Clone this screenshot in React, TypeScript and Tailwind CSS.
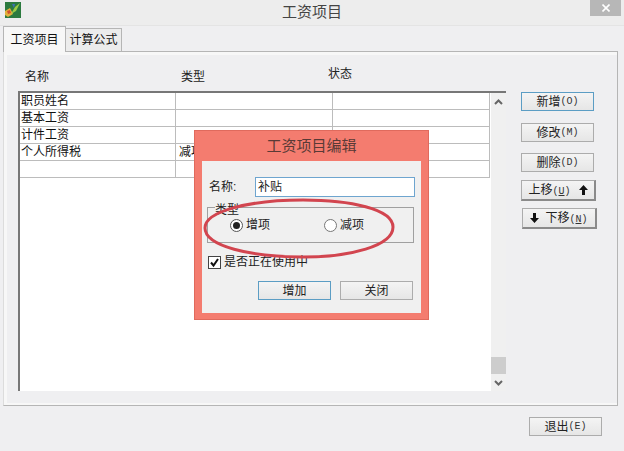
const font = { fontFamily: '"Liberation Sans", "Noto Sans CJK SC", sans-serif' }

const rows = [
  ['职员姓名', ''],
  ['基本工资', ''],
  ['计件工资', ''],
  ['个人所得税', '减项'],
  ['', ''],
]

const AppIcon = () => (
  <svg width="16" height="16" viewBox="0 0 16 16">
    <rect width="16" height="16" fill="#2c7a3f" />
    <path d="M0 9 L5 6 L8 12 L3 15 L0 13Z" fill="#e2b13c" />
    <path d="M2 9 L5 8 L6 11 L3 12Z" fill="#d24f2e" />
    <path d="M6 12 L10 5 L15 1 L11 9Z" fill="#9ccb45" />
    <path d="M7 2 L10 2 L9 6Z" fill="#3f6fb5" />
  </svg>
)

const Hotkey = ({ k, underline }: { k: string; underline?: boolean }) => (
  <span className="font-['Liberation_Mono'] text-[10px] text-[#333]">
    (<span className={underline ? 'underline' : ''}>{k}</span>)
  </span>
)

const Btn = ({
  children,
  className,
  focused,
}: {
  children: React.ReactNode
  className: string
  focused?: boolean
}) => (
  <div
    className={`flex items-center justify-center text-xs text-[#222] border bg-gradient-to-b from-[#f4f4f4] to-[#e6e6e6] ${
      focused ? 'border-[#5b9dc4]' : 'border-[#acacac]'
    } ${className}`}
  >
    {children}
  </div>
)

const Arrow = ({ down }: { down?: boolean }) => (
  <svg width="9" height="10" viewBox="0 0 9 10" className={down ? 'rotate-180' : ''}>
    <path d="M4.5 0 L9 5 L6 5 L6 10 L3 10 L3 5 L0 5Z" fill="#111" />
  </svg>
)

const Chevron = ({ down }: { down?: boolean }) => (
  <svg width="9" height="6" viewBox="0 0 9 6" className={down ? 'rotate-180' : ''}>
    <path d="M1 5 L4.5 1.5 L8 5" fill="none" stroke="#666" strokeWidth="2" />
  </svg>
)

const SalaryTable = () => (
  <div className="ml-[11px] w-[488px] h-[300px] flex border-t-2 border-l-2 border-t-[#777] border-l-[#777] bg-white">
    <div className="w-[470px]">
      {rows.map((row, i) => (
        <div key={i} className="flex h-[17px] border-b border-[#bcbcbc] w-[470px]">
          <div className="w-[156px] border-r border-[#bcbcbc] pl-[1px] text-xs leading-[16px] text-[#111]">
            {row[0]}
          </div>
          <div className="w-[157px] border-r border-[#bcbcbc] pl-[3px] text-xs leading-[16px] text-[#111]">
            {row[1]}
          </div>
          <div className="flex-1 border-r border-[#bcbcbc]" />
        </div>
      ))}
    </div>
    <div className="w-[16px] bg-[#f0f0f0] flex flex-col items-center border-l border-white">
      <div className="h-[18px] flex items-center justify-center">
        <Chevron />
      </div>
      <div className="flex-1" />
      <div className="w-full h-[17px] bg-[#cdcdcd]" />
      <div className="h-[17px] flex items-center justify-center">
        <Chevron down />
      </div>
    </div>
  </div>
)

const EditDialog = () => (
  <div className="absolute left-[194px] top-[130px] w-[235px] h-[190px] bg-[#f47c6f] border border-[#e06a5d] flex flex-col">
    <div className="h-[30px] flex items-center justify-center text-[15px] text-[#5a3a36]">工资项目编辑</div>
    <div className="mx-[7px] h-[152px] bg-[#f0f0f0] flex flex-col text-xs text-[#222]">
      <div className="flex items-center mt-[16px] ml-[7px] h-[20px]">
        <span className="w-[46px]">名称:</span>
        <div className="w-[160px] h-[20px] bg-white border border-[#6ea5cf] pl-[2px] leading-[18px]">补贴</div>
      </div>
      <div className="relative mt-[10px] ml-[5px] w-[207px] h-[36px] border border-[#a0a0a0] flex items-center">
        <span className="absolute -top-[5px] left-[7px] leading-[14px] bg-[#f0f0f0]">类型</span>
        <div className="ml-[22px] w-[13px] h-[13px] rounded-full border border-[#555] bg-white flex items-center justify-center">
          <div className="w-[7px] h-[7px] rounded-full bg-[#222]" />
        </div>
        <span className="ml-[3px]">增项</span>
        <div className="ml-[54px] w-[13px] h-[13px] rounded-full border border-[#777] bg-white" />
        <span className="ml-[3px]">减项</span>
      </div>
      <div className="flex items-center mt-[11px] ml-[6px]">
        <div className="w-[13px] h-[13px] border border-[#444] bg-white flex items-center justify-center">
          <svg width="11" height="11" viewBox="0 0 11 11">
            <path d="M2 5.5 L4.5 8.5 L9 2" fill="none" stroke="#111" strokeWidth="2" />
          </svg>
        </div>
        <span className="ml-[3px]">是否正在使用中</span>
      </div>
      <div className="flex mt-[11px] ml-[56px] gap-[9px]">
        <Btn focused className="w-[73px] h-[19px]">增加</Btn>
        <Btn className="w-[73px] h-[19px]">关闭</Btn>
      </div>
    </div>
  </div>
)

export default function App() {
  return (
    <div style={font} className="relative w-[624px] h-[451px] bg-[#efeff1] overflow-hidden">
      <div className="relative h-[26px] bg-[#ededed] flex items-center justify-center border-b border-[#e4e4e4]">
        <div className="absolute left-[5px] top-[2px]">
          <AppIcon />
        </div>
        <span className="text-[15px] text-[#444]">工资项目</span>
        <div className="absolute right-[3px] top-0 w-[31px] h-[16px] bg-[#b7b7b7] flex items-center justify-center">
          <svg width="8" height="8" viewBox="0 0 8 8">
            <path d="M0.5 0.5 L7.5 7.5 M7.5 0.5 L0.5 7.5" stroke="#fff" strokeWidth="1.6" />
          </svg>
        </div>
      </div>

      <div className="flex h-[26px] pl-[3px] items-end">
        <div className="w-[63px] h-[26px] bg-[#f7f7f7] border border-b-0 border-[#b5b5b5] flex items-center justify-center text-xs text-[#111]">
          工资项目
        </div>
        <div className="w-[56px] h-[24px] bg-[#ececec] border border-l-0 border-[#b5b5b5] flex items-center justify-center text-xs text-[#111]">
          计算公式
        </div>
        <div className="flex-1 mr-[6px] border-b border-[#b5b5b5]" />
      </div>

      <div className="ml-[3px] w-[615px] h-[354px] border border-t-0 border-[#b5b5b5] border-l-[#dcdcdc] pl-[3px] pt-[3px] bg-[#f7f7f7]">
        <div className="w-[610px] h-[348px] bg-[#efeff1]">
          <div className="flex h-[36px] text-xs text-[#222]">
            <span className="ml-[18px] mt-[14px] w-[156px]">名称</span>
            <span className="mt-[14px] w-[147px]">类型</span>
            <span className="mt-[11px]">状态</span>
          </div>
          <div className="flex">
            <SalaryTable />
            <div className="ml-[15px] flex flex-col items-start">
              <Btn focused className="w-[73px] h-[19px] mt-[1px]">
                新增<Hotkey k="O" />
              </Btn>
              <Btn className="w-[73px] h-[19px] mt-[12px]">
                修改<Hotkey k="M" />
              </Btn>
              <Btn className="w-[73px] h-[19px] mt-[11px]">
                删除<Hotkey k="D" />
              </Btn>
              <Btn className="w-[75px] h-[21px] mt-[8px] gap-[8px] border-b-2 border-r-2 border-b-[#8a8a8a] border-r-[#8a8a8a]">
                <span>
                  上移<Hotkey k="U" underline />
                </span>
                <Arrow />
              </Btn>
              <Btn className="w-[75px] h-[21px] mt-[7px] ml-[1px] gap-[6px] border-b-2 border-r-2 border-b-[#8a8a8a] border-r-[#8a8a8a]">
                <Arrow down />
                <span>
                  下移<Hotkey k="N" underline />
                </span>
              </Btn>
            </div>
          </div>
        </div>
      </div>

      <div className="flex justify-end pr-[22px] pt-[11px]">
        <Btn className="w-[73px] h-[19px]">
          退出<Hotkey k="E" />
        </Btn>
      </div>

      <EditDialog />

      <svg className="absolute left-[200px] top-[196px]" width="200" height="70" viewBox="0 0 200 70">
        <path
          d="M5 32 C5 15 50 4 103 4 C150 4 193 13 193 31 C193 50 150 61 103 61 C50 61 5 50 5 32Z"
          fill="none"
          stroke="#d2454f"
          strokeWidth="3"
        />
      </svg>
    </div>
  )
}
